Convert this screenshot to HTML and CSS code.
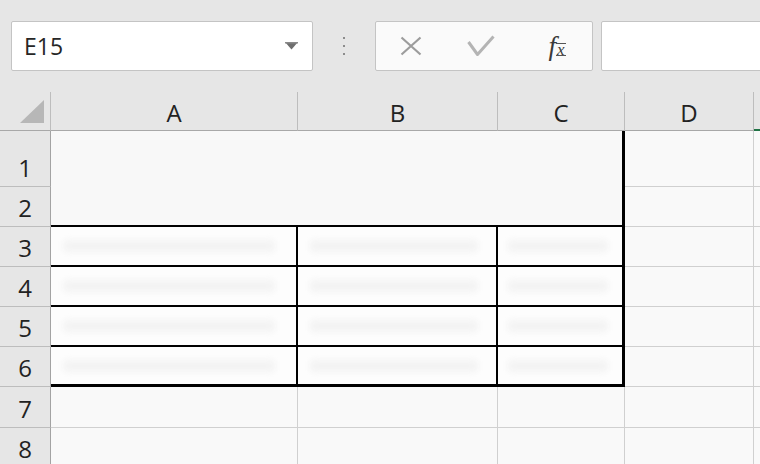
FILE: index.html
```html
<!DOCTYPE html>
<html>
<head>
<meta charset="utf-8">
<link rel="stylesheet" href="styles.css">
</head>
<body>
<div class="toolbar">
  <div class="namebox">
    <span class="name">E15</span>
    <svg class="arrow" width="13" height="8" viewBox="0 0 13 8"><polygon points="0,0 13,0 6.5,7.5" fill="#6e6e6e"/><rect x="0" y="0" width="13" height="1.5" fill="#8a8a8a"/></svg>
  </div>
  <div class="dots"><i></i><i></i><i></i></div>
  <div class="fnbox">
    <div class="slot">
      <svg width="22" height="20" viewBox="0 0 22 20"><path d="M1.5 1.5 L20.5 18.5 M20.5 1.5 L1.5 18.5" stroke="#9c9c9c" stroke-width="2.2" fill="none"/></svg>
    </div>
    <div class="slot">
      <svg width="28" height="22" viewBox="0 0 28 22"><path d="M1.5 7 L10.5 19.5 L26.5 1.5" stroke="#b4b4b4" stroke-width="3" fill="none" stroke-linejoin="round"/></svg>
    </div>
    <div class="slot fx"><span class="f">f</span><span class="x">x</span></div>
  </div>
  <div class="formula"></div>
</div>

<div class="sheet">
  <div class="corner"><svg width="24" height="23" viewBox="0 0 24 23"><polygon points="24,0 24,23 0,23" fill="#b7b7b7"/></svg></div>
  <div class="ch">A</div>
  <div class="ch">B</div>
  <div class="ch">C</div>
  <div class="ch">D</div>
  <div class="ch sel"></div>

  <div class="rh">1</div>
  <div class="merged"></div>
  <div class="cell"></div>
  <div class="cell edge"></div>

  <div class="rh">2</div>
  <div class="cell"></div>
  <div class="cell edge"></div>

  <div class="rh">3</div>
  <div class="cell t"><span class="blur wa"></span></div>
  <div class="cell t"><span class="blur wb"></span></div>
  <div class="cell t tr"><span class="blur wc"></span></div>
  <div class="cell"></div>
  <div class="cell edge"></div>

  <div class="rh">4</div>
  <div class="cell t"><span class="blur wa"></span></div>
  <div class="cell t"><span class="blur wb"></span></div>
  <div class="cell t tr"><span class="blur wc"></span></div>
  <div class="cell"></div>
  <div class="cell edge"></div>

  <div class="rh">5</div>
  <div class="cell t"><span class="blur wa"></span></div>
  <div class="cell t"><span class="blur wb"></span></div>
  <div class="cell t tr"><span class="blur wc"></span></div>
  <div class="cell"></div>
  <div class="cell edge"></div>

  <div class="rh">6</div>
  <div class="cell t tb"><span class="blur wa"></span></div>
  <div class="cell t tb"><span class="blur wb"></span></div>
  <div class="cell t tr tb"><span class="blur wc"></span></div>
  <div class="cell"></div>
  <div class="cell edge"></div>

  <div class="rh">7</div>
  <div class="cell"></div>
  <div class="cell"></div>
  <div class="cell"></div>
  <div class="cell"></div>
  <div class="cell edge"></div>

  <div class="rh">8</div>
  <div class="cell"></div>
  <div class="cell"></div>
  <div class="cell"></div>
  <div class="cell"></div>
  <div class="cell edge"></div>
</div>
</body>
</html>
```

FILE: styles.css
```css
* { box-sizing: border-box; }
html, body {
  margin: 0;
  padding: 0;
  width: 760px;
  height: 464px;
  overflow: hidden;
  background: #e6e6e6;
  font-family: "Open Sans", "Noto Sans", "Liberation Sans", sans-serif;
  color: #222;
}

.toolbar {
  height: 92px;
  background: #e6e6e6;
  display: flex;
  align-items: flex-start;
  padding: 21px 0 0 11px;
  overflow: hidden;
}
.toolbar > * { flex-shrink: 0; }

.namebox {
  width: 302px;
  height: 50px;
  background: #fff;
  border: 1px solid #c4c4c4;
  border-radius: 2px;
  display: flex;
  align-items: center;
  justify-content: space-between;
  padding: 0 14px 0 12px;
}
.name {
  font-size: 23px;
  line-height: 24px;
  color: #262626;
}

.dots {
  width: 62px;
  height: 50px;
  display: flex;
  flex-direction: column;
  align-items: center;
  justify-content: center;
  gap: 6px;
  padding-bottom: 1px;
}
.dots i {
  display: block;
  width: 2px;
  height: 2px;
  background: #8c8c8c;
}

.fnbox {
  width: 218px;
  height: 50px;
  background: #fafafa;
  border: 1px solid #c4c4c4;
  border-radius: 2px;
  display: flex;
  align-items: center;
}
.slot {
  flex: 1;
  display: flex;
  align-items: center;
  justify-content: center;
}
.fx {
  font-family: "Liberation Serif", "DejaVu Serif", serif;
  font-style: italic;
  color: #3a3a3a;
  align-items: baseline;
  padding-left: 6px;
}
.fx .f { font-size: 27px; line-height: 24px; }
.fx .x {
  font-size: 17px;
  line-height: 11px;
  margin-left: 0;
  border-top: 1px solid #555;
  border-bottom: 1px solid #555;
  padding: 0 1px;
}

.formula {
  margin-left: 8px;
  width: 200px;
  height: 50px;
  background: #fff;
  border: 1px solid #c4c4c4;
  border-radius: 2px;
}

.sheet {
  display: grid;
  grid-template-columns: 51px 247px 200px 127px 129px 6px;
  grid-template-rows: 39px 56px 40px 40px 40px 40px 40px 41px 40px;
  background: #f9f9f9;
}

.corner {
  background: #e6e6e6;
  border-right: 1px solid #bdbdbd;
  border-bottom: 1px solid #a8a8a8;
  display: flex;
  align-items: flex-end;
  justify-content: flex-end;
  padding: 0 6px 7px 0;
}

.ch {
  background: #e6e6e6;
  border-right: 1px solid #bdbdbd;
  border-bottom: 1px solid #a8a8a8;
  display: flex;
  align-items: center;
  justify-content: center;
  font-size: 24px;
  line-height: 24px;
  padding-top: 3px;
}
.ch.sel {
  border-right: none;
  border-bottom: 2px solid #217346;
}

.rh {
  background: #e6e6e6;
  border-right: 1px solid #a3a3a3;
  border-bottom: 1px solid #bdbdbd;
  display: flex;
  align-items: flex-end;
  justify-content: center;
  font-size: 24px;
  line-height: 24px;
  padding-bottom: 6px;
}

.cell {
  border-right: 1px solid #d0d0d0;
  border-bottom: 1px solid #d0d0d0;
  display: flex;
  align-items: center;
  justify-content: flex-start;
  overflow: hidden;
}
.cell.edge { border-right: none; }

.merged {
  grid-column: span 3;
  grid-row: span 2;
  background: #f8f8f8;
  border-right: 3px solid #000;
  border-bottom: 2px solid #000;
}

.cell.t {
  background: #fdfdfd;
  border-right: 2px solid #000;
  border-bottom: 2px solid #000;
}
.cell.tr { border-right: 3px solid #000; }
.cell.tb { border-bottom: 3px solid #000; }

.blur {
  display: block;
  height: 12px;
  background: #f3f3f3;
  filter: blur(3px);
  border-radius: 4px;
}
.wa { width: 212px; margin-left: 12px; }
.wb { width: 168px; margin-left: 12px; }
.wc { width: 100px; margin-left: 10px; }
```
